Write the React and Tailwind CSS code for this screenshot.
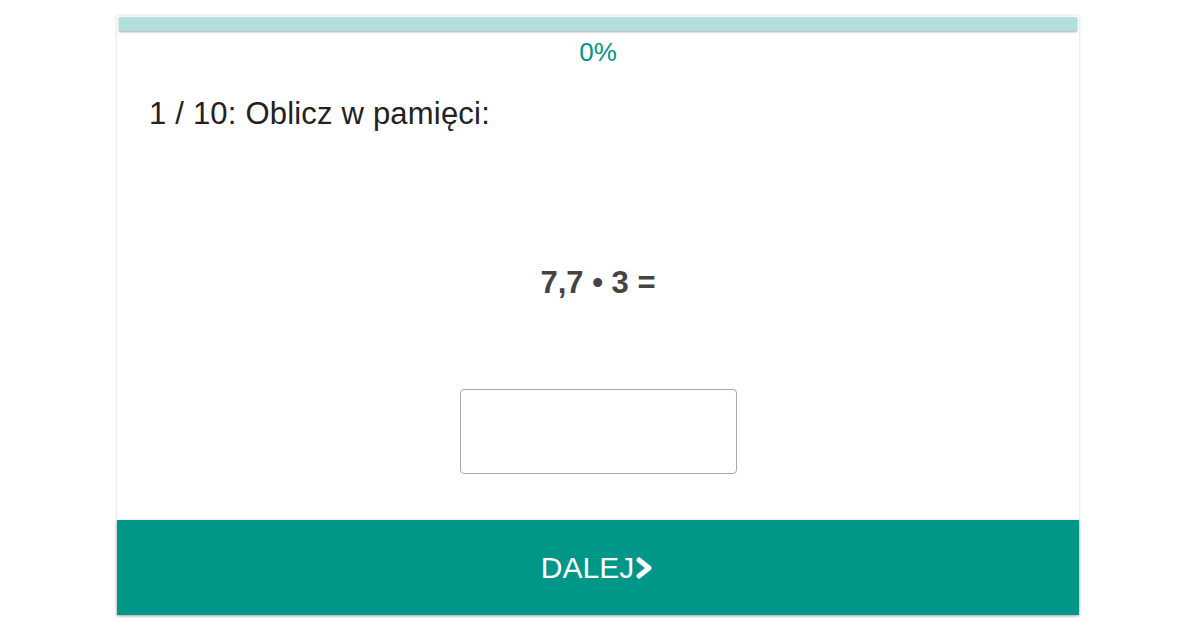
import React from 'react'

const font = { fontFamily: '"Liberation Sans", Arial, sans-serif' }

const Chevron = () => (
  <svg width="20" height="22" viewBox="0 0 20 22" className="ml-[1px]">
    <path d="M4 3 L14 11 L4 19" fill="none" stroke="white" strokeWidth="5" strokeLinecap="round" strokeLinejoin="round" />
  </svg>
)

export default function App() {
  return (
    <div className="min-h-screen w-full bg-white" style={font}>
      <div className="ml-[117px] pt-[16px] w-[962px]">
        <div className="flex flex-col bg-white shadow-[0_0_3px_rgba(0,0,0,0.18)]">
          {/* progress */}
          <div className="mx-[2px] mt-[1px] h-[14px] bg-[#b2dfdb] shadow-[0_1px_2px_rgba(0,0,0,0.35)]" />
          <div className="mt-[6px] text-center text-[26px] leading-[30px] text-[#009688]">0%</div>

          <h2 className="mt-[29px] pl-[32px] text-[31px] leading-[36px] tracking-[0.2px] text-[#222]">
            1 / 10: Oblicz w pamięci:
          </h2>

          <div className="mt-[133px] text-center text-[31px] leading-[36px] font-bold text-[#444]">
            7,7 • 3 =
          </div>

          <div className="mt-[88px] flex justify-center">
            <input
              type="text"
              className="h-[85px] w-[277px] rounded-[4px] border border-[#a8a8a8] bg-white px-3 text-[28px] outline-none"
            />
          </div>

          <button className="mt-[46px] flex h-[95px] w-full items-center justify-center bg-[#009688] text-[30px] text-white shadow-[0_1px_3px_rgba(0,0,0,0.3)]">
            <span className="leading-none">DALEJ</span>
            <Chevron />
          </button>
        </div>
      </div>
    </div>
  )
}
